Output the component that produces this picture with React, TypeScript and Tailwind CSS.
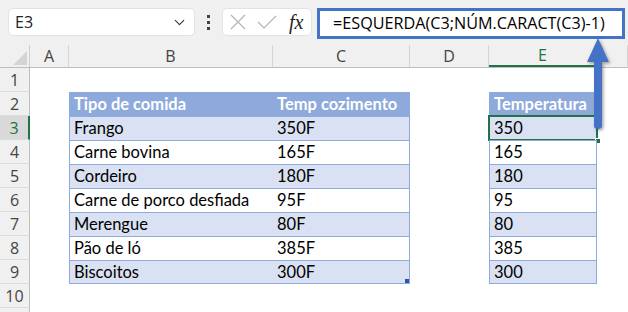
import { ChevronDown } from 'lucide-react';

const cols = [
  { key: 'A', w: 'w-[39px]' },
  { key: 'B', w: 'w-[204px]' },
  { key: 'C', w: 'w-[137px]' },
  { key: 'D', w: 'w-[79px]' },
  { key: 'E', w: 'w-[108px]' },
  { key: 'F', w: 'flex-1' },
];

const foods = [
  ['Frango', '350F', '350'],
  ['Carne bovina', '165F', '165'],
  ['Cordeiro', '180F', '180'],
  ['Carne de porco desfiada', '95F', '95'],
  ['Merengue', '80F', '80'],
  ['Pão de ló', '385F', '385'],
  ['Biscoitos', '300F', '300'],
];

const cellFont = "font-['Lato','Liberation_Sans',sans-serif] text-[16.5px]";
const uiFont = "font-['Open_Sans','Noto_Sans',sans-serif]";

function RowHeader({ n, active }: { n?: number; active?: boolean }) {
  return (
    <div
      className={`w-[30px] shrink-0 flex items-center justify-center border-b border-[#dcdcdc] ${uiFont} text-[16px] ${
        active
          ? 'bg-[#d9d9d9] text-[#217346] border-r-2 border-r-[#217346]'
          : 'bg-[#f0f0f0] text-[#444] border-r border-r-[#bdbdbd]'
      }`}
    >
      {n}
    </div>
  );
}

function TableCell({
  text,
  header,
  band,
  left,
  right,
  last,
  w,
}: {
  text: string;
  header?: boolean;
  band?: boolean;
  left?: boolean;
  right?: boolean;
  last?: boolean;
  w: string;
}) {
  return (
    <div
      className={`${w} shrink-0 flex items-center pl-[4px] border-t border-[#8ea9db] ${left ? 'border-l' : ''} ${
        right ? 'border-r' : ''
      } ${last ? 'border-b' : ''} ${
        header ? 'bg-[#8ea9db] text-white font-bold' : band ? 'bg-[#d9e1f2] text-black' : 'bg-white text-black'
      } ${cellFont}`}
    >
      {text}
    </div>
  );
}

function Row({ n }: { n: number }) {
  const isHeader = n === 2;
  const idx = n - 3;
  const inTable = n >= 2 && n <= 9;
  const band = n % 2 === 1;
  const last = n === 9;
  const b = isHeader ? 'Tipo de comida' : inTable ? foods[idx][0] : '';
  const c = isHeader ? 'Temp cozimento' : inTable ? foods[idx][1] : '';
  const e = isHeader ? 'Temperatura' : inTable ? foods[idx][2] : '';
  return (
    <div className="flex h-[24px]">
      <RowHeader n={n} active={n === 3} />
      <div className="w-[39px] shrink-0" />
      {inTable ? (
        <>
          <TableCell w="w-[204px]" text={b} header={isHeader} band={band} left last={last} />
          <div className="relative w-[137px] shrink-0 flex">
            <TableCell w="w-full" text={c} header={isHeader} band={band} right last={last} />
            {last && <div className="absolute right-[1px] bottom-[1px] w-[4px] h-[4px] bg-[#2f55a4]" />}
          </div>
          <div className="w-[79px] shrink-0" />
          <div className="relative w-[108px] shrink-0 flex">
            <TableCell w="w-full" text={e} header={isHeader} band={band} left right last={last} />
            {n === 3 && (
              <>
                <div className="absolute inset-[-1px] border-2 border-[#217346]" />
                <div className="absolute right-[-4px] bottom-[-4px] w-[6px] h-[6px] bg-[#217346] border border-white" />
              </>
            )}
          </div>
        </>
      ) : (
        <div className="flex-1" />
      )}
    </div>
  );
}

export default function App() {
  return (
    <div className="relative w-[628px] h-[312px] overflow-hidden bg-white">
      {/* formula bar */}
      <div className="h-[45px] bg-[#f0f0f0] flex items-start pt-[8px] pl-[8px]">
        <div className="w-[187px] h-[28px] bg-white rounded-[5px] border border-[#e3e3e3] flex items-center pl-[6px] pr-[6px]">
          <span className={`${uiFont} text-[16px] text-[#222]`}>E3</span>
          <ChevronDown className="ml-auto text-[#333]" size={17} strokeWidth={1.5} />
        </div>
        <div className="w-[27px] h-[28px] flex flex-col items-center justify-center gap-[3px]">
          <div className="w-[3px] h-[3px] bg-[#444]" />
          <div className="w-[3px] h-[3px] bg-[#444]" />
          <div className="w-[3px] h-[3px] bg-[#444]" />
        </div>
        <div className="w-[90px] h-[28px] bg-white rounded-[5px] border border-[#e3e3e3] flex items-center pl-[6px] gap-[10px]">
          <svg width="18" height="18" viewBox="0 0 18 18" className="shrink-0">
            <path d="M2 2 L16 16 M16 2 L2 16" stroke="#b4b4b4" strokeWidth="1.2" fill="none" />
          </svg>
          <svg width="20" height="16" viewBox="0 0 20 16" className="shrink-0">
            <path d="M1 8 L7 14 L19 2" stroke="#b4b4b4" strokeWidth="1.2" fill="none" />
          </svg>
          <span className="font-['Liberation_Serif',serif] italic text-[20px] text-[#222] leading-none ml-[2px]">fx</span>
        </div>
        <div className="ml-[5px] w-[308px] h-[31px] bg-white border-[3px] border-[#4472c4] flex items-center pl-[13px]">
          <span className={`${uiFont} text-[16.2px] text-black whitespace-nowrap`}>=ESQUERDA(C3;NÚM.CARACT(C3)-1)</span>
        </div>
      </div>

      {/* column headers */}
      <div className="flex h-[23px] bg-[#f0f0f0] border-b border-[#bdbdbd]">
        <div className="w-[30px] shrink-0 relative border-r border-[#d0d0d0]">
          <div className="absolute right-[2px] bottom-[2px] w-0 h-0 border-l-[14px] border-l-transparent border-b-[14px] border-b-[#d4d4d4]" />
        </div>
        {cols.map((c) => (
          <div
            key={c.key}
            className={`${c.w} shrink-0 flex items-center justify-center border-r border-[#d4d4d4] ${uiFont} text-[16px] ${
              c.key === 'E' ? 'text-[#217346] border-b-2 border-b-[#217346]' : 'text-[#444]'
            }`}
          >
            {c.key === 'F' ? '' : c.key}
          </div>
        ))}
      </div>

      {/* rows */}
      {Array.from({ length: 10 }, (_, i) => (
        <Row key={i} n={i + 1} />
      ))}
      <div className="flex h-[24px]">
        <RowHeader />
      </div>

      {/* annotation arrow */}
      <svg className="absolute left-[580px] top-[34px]" width="40" height="100" viewBox="0 0 40 100">
        <defs>
          <filter id="sh" x="-50%" y="-20%" width="200%" height="150%">
            <feDropShadow dx="1.5" dy="1.5" stdDeviation="1.5" floodColor="#000" floodOpacity="0.35" />
          </filter>
        </defs>
        <path
          d="M18 4 L29 28 L22 28 L22 92 Q22 95 18 95 Q14 95 14 92 L14 28 L7 28 Z"
          fill="#4472c4"
          filter="url(#sh)"
        />
      </svg>
    </div>
  );
}
